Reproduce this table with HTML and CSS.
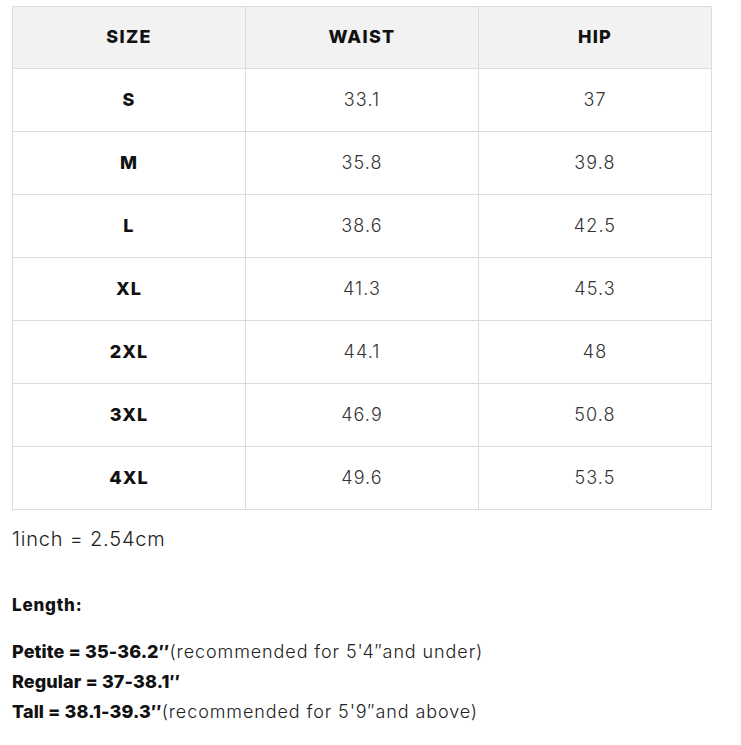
FILE: index.html
```html
<!DOCTYPE html>
<html>
<head>
<meta charset="utf-8">
<link rel="stylesheet" href="styles.css">
</head>
<body>
<div class="page">
  <table class="size-table">
    <thead>
      <tr><th>SIZE</th><th>WAIST</th><th>HIP</th></tr>
    </thead>
    <tbody>
      <tr><td class="size">S</td><td>33.1</td><td>37</td></tr>
      <tr><td class="size">M</td><td>35.8</td><td>39.8</td></tr>
      <tr><td class="size">L</td><td>38.6</td><td>42.5</td></tr>
      <tr><td class="size">XL</td><td>41.3</td><td>45.3</td></tr>
      <tr><td class="size">2XL</td><td>44.1</td><td>48</td></tr>
      <tr><td class="size">3XL</td><td>46.9</td><td>50.8</td></tr>
      <tr><td class="size">4XL</td><td>49.6</td><td>53.5</td></tr>
    </tbody>
  </table>
  <p class="conv">1inch = 2.54cm</p>
  <p class="label">Length:</p>
  <div class="lengths">
    <p><strong>Petite = 35-36.2″</strong>(recommended for 5'4″and under)</p>
    <p><strong>Regular = 37-38.1″</strong></p>
    <p><strong>Tall = 38.1-39.3″</strong>(recommended for 5'9″and above)</p>
  </div>
</div>
</body>
</html>
```

FILE: styles.css
```css
html, body {
  margin: 0;
  padding: 0;
  background: #fff;
}
body {
  font-family: "Inter", "Liberation Sans", sans-serif;
  color: #222;
}
.page {
  padding: 6px 0 0 12px;
}
.size-table {
  width: 700px;
  border-collapse: collapse;
  table-layout: fixed;
}
.size-table th,
.size-table td {
  border: 1px solid #dcdcdc;
  height: 60px;
  padding: 0 0 2px;
  text-align: center;
  vertical-align: middle;
}
.size-table th {
  height: 59px;
  background: #f2f2f2;
  font-weight: 800;
  font-size: 18px;
  letter-spacing: 1.3px;
  color: #111;
}
.size-table td {
  font-size: 18px;
  font-weight: 300;
  letter-spacing: 1.1px;
  color: #333;
}
.size-table td.size {
  font-weight: 800;
  letter-spacing: 1.1px;
  color: #111;
}
.conv {
  margin: 17px 0 0;
  font-size: 20px;
  font-weight: 300;
  line-height: 24px;
  letter-spacing: 0.8px;
  color: #222;
}
.label {
  margin: 42px 0 0;
  font-size: 17px;
  font-weight: 800;
  line-height: 24px;
  letter-spacing: 0.8px;
  color: #111;
}
.lengths {
  margin-top: 20px;
}
.lengths p {
  margin: 0;
  font-size: 18px;
  line-height: 30px;
  font-weight: 300;
  letter-spacing: 0.9px;
  color: #222;
}
.lengths strong {
  font-weight: 800;
  letter-spacing: 0.1px;
  color: #111;
}
```
